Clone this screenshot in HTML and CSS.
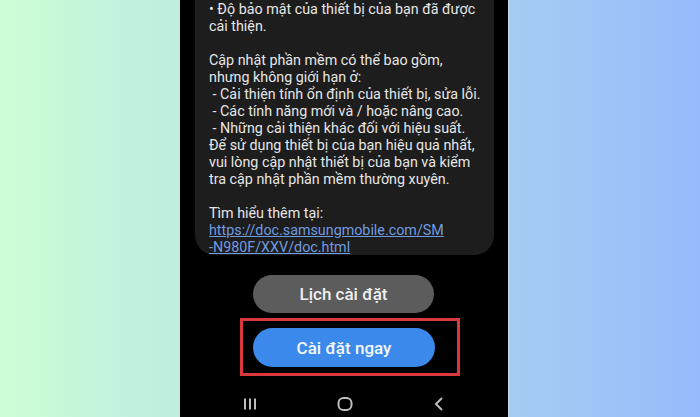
FILE: index.html
```html
<!DOCTYPE html>
<html lang="vi">
<head>
<meta charset="utf-8">
<title>Cập nhật phần mềm</title>
<link rel="stylesheet" href="styles.css">
</head>
<body>
<div class="stage">
  <div class="phone">
    <div class="card">
      <p class="ln">• Độ bảo mật của thiết bị của bạn đã được</p>
      <p class="ln">cải thiện.</p>
      <p class="ln gap"></p>
      <p class="ln">Cập nhật phần mềm có thể bao gồm,</p>
      <p class="ln">nhưng không giới hạn ở:</p>
      <p class="ln"> - Cải thiện tính ổn định của thiết bị, sửa lỗi.</p>
      <p class="ln"> - Các tính năng mới và / hoặc nâng cao.</p>
      <p class="ln"> - Những cải thiện khác đối với hiệu suất.</p>
      <p class="ln">Để sử dụng thiết bị của bạn hiệu quả nhất,</p>
      <p class="ln">vui lòng cập nhật thiết bị của bạn và kiểm</p>
      <p class="ln">tra cập nhật phần mềm thường xuyên.</p>
      <p class="ln gap"></p>
      <p class="ln">Tìm hiểu thêm tại:</p>
      <p class="ln"><a class="link" href="#">https://doc.samsungmobile.com/SM</a></p>
      <p class="ln"><a class="link" href="#">-N980F/XXV/doc.html</a></p>
    </div>
    <div class="btn btn-grey">Lịch cài đặt</div>
    <div class="highlight">
      <div class="btn btn-blue">Cài đặt ngay</div>
    </div>
    <div class="navbar">
      <svg class="nav-recent" width="14" height="12" viewBox="0 0 14 12">
        <rect x="1" y="0.5" width="2" height="11" fill="#bdbdbd"/>
        <rect x="6" y="0.5" width="2" height="11" fill="#bdbdbd"/>
        <rect x="11" y="0.5" width="2" height="11" fill="#bdbdbd"/>
      </svg>
      <svg class="nav-home" width="16" height="14" viewBox="0 0 16 14">
        <rect x="1.5" y="1" width="13" height="12" rx="5" fill="none" stroke="#bdbdbd" stroke-width="2"/>
      </svg>
      <svg class="nav-back" width="10" height="14" viewBox="0 0 10 14">
        <path d="M8 1 L2 7 L8 13" fill="none" stroke="#bdbdbd" stroke-width="2" stroke-linejoin="miter"/>
      </svg>
    </div>
  </div>
</div>
</body>
</html>
```
FILE: styles.css
```css
html, body {
  margin: 0;
  padding: 0;
}
body {
  width: 700px;
  height: 417px;
  overflow: hidden;
  background: linear-gradient(to right, #ccfed6 0%, #96bbfd 100%);
  font-family: Roboto, "Noto Sans", "Liberation Sans", sans-serif;
}
.stage {
  height: 417px;
  padding-left: 180px;
}
.phone {
  width: 329px;
  height: 417px;
  background: #000;
  box-sizing: border-box;
  border-right: 1px solid #c9d6e6;
  overflow: hidden;
}
.card {
  margin: 0 14px 0 15px;
  height: 255px;
  box-sizing: border-box;
  background: #1d1d1d;
  border-radius: 0 0 20px 20px;
  padding: 1px 0 0 14px;
}
.ln {
  margin: 0;
  height: 17px;
  line-height: 17px;
  font-size: 14.3px;
  color: #e6e6e6;
  white-space: pre;
}
.link {
  color: #6f9be0;
  text-decoration: underline;
}
.btn {
  box-sizing: border-box;
  border-radius: 20px;
  display: flex;
  align-items: center;
  justify-content: center;
  font-size: 17px;
  font-weight: 500;
}
.btn-grey {
  margin: 20px 0 0 73px;
  width: 181px;
  height: 38px;
  background: #5c5c5c;
  color: #f0f0f0;
}
.highlight {
  margin: 5px 0 0 60px;
  width: 220px;
  height: 58px;
  box-sizing: border-box;
  border: 3px solid #d9393c;
  padding: 7px 22px 6px 10px;
}
.btn-blue {
  width: 182px;
  height: 39px;
  background: #3b89ea;
  color: #f5f8ff;
}
.navbar {
  display: flex;
  align-items: center;
  margin-top: 22px;
  height: 12px;
}
.nav-recent {
  margin-left: 63px;
}
.nav-home {
  margin-left: 80px;
}
.nav-back {
  margin-left: 81px;
}
```
